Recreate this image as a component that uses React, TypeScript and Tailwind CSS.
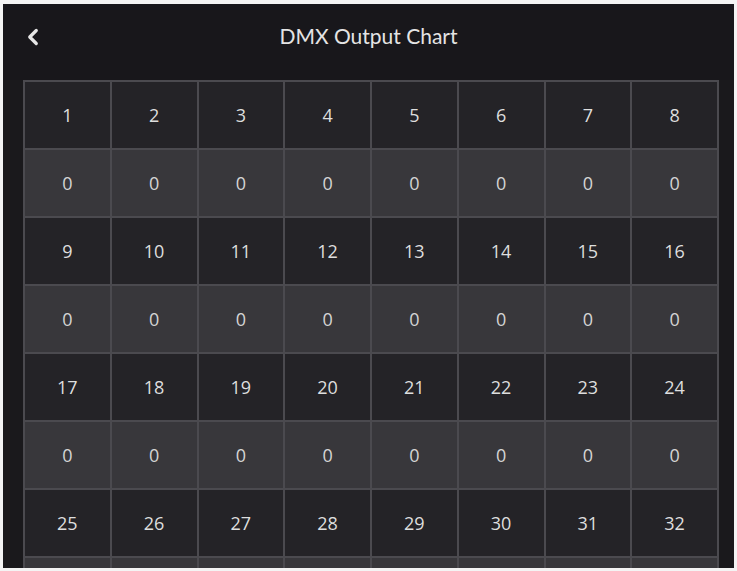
import { ChevronLeft } from "lucide-react"

const rows: { kind: "ch" | "val"; cells: (number | null)[] }[] = []
for (let r = 0; r < 4; r++) {
  rows.push({ kind: "ch", cells: Array.from({ length: 8 }, (_, i) => r * 8 + i + 1) })
  if (r < 3) rows.push({ kind: "val", cells: Array.from({ length: 8 }, () => 0) })
}
// partially visible row at the bottom edge, its values sit below the fold
rows.push({ kind: "val", cells: Array.from({ length: 8 }, () => null) })

export default function App() {
  return (
    <div className="w-[737px] h-[571px] bg-[#f4f4f4] pt-[4px] pl-[3px] pr-[3px] pb-[3px] overflow-hidden">
      <div className="h-full bg-[#18171b] flex flex-col overflow-hidden" style={{ fontFamily: "Lato, 'Open Sans', sans-serif" }}>
        {/* Header */}
        <div className="relative h-[76px] shrink-0 flex items-start justify-center pt-[16px]">
          <button className="absolute left-[17px] top-[20px] text-[#e6e6e6]">
            <ChevronLeft size={26} strokeWidth={3} />
          </button>
          <h1 className="text-[21px] text-[#e4e4e4]">DMX Output Chart</h1>
        </div>

        {/* Chart */}
        <div className="flex-1 overflow-hidden pl-[20px] pr-[15px] bg-[#1a191c]">
          <div className="grid grid-cols-8 gap-[2px] p-[2px] bg-[#4b4a4f]">
            {rows.map((row, ri) =>
              row.cells.map((n, ci) => (
                <div
                  key={`${ri}-${ci}`}
                  className={`h-[66px] flex items-center justify-center text-[18px] font-medium ${
                    row.kind === "ch"
                      ? "bg-[#242327] text-[#dedede]"
                      : "bg-[#38373b] text-[#d4d4d4]"
                  }`}
                  style={{ fontFamily: "'Open Sans', sans-serif" }}
                >
                  {n}
                </div>
              ))
            )}
          </div>
        </div>
      </div>
    </div>
  )
}
